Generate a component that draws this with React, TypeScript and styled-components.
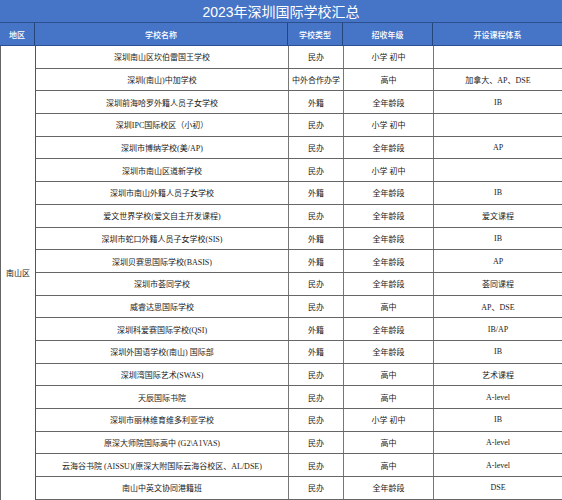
import React from 'react';
import styled, { createGlobalStyle } from 'styled-components';

const GlobalStyle = createGlobalStyle`
  html, body {
    margin: 0;
    padding: 0;
    background: #ffffff;
    overflow: hidden;
  }
`;

const COLS = '253px 55px 90px 1fr';
const ROW_HEIGHT = 22.7;

const Sheet = styled.div`
  width: 562px;
  height: 500px;
  overflow: hidden;
  background: #ffffff;
`;

const Title = styled.div`
  height: 22px;
  background: #4674c6;
  border-bottom: 1px solid #2c4f8f;
  color: #ffffff;
  font-family: 'Liberation Sans', 'Noto Sans CJK SC', sans-serif;
  font-size: 14px;
  display: flex;
  align-items: center;
  justify-content: center;
`;

const HeaderRow = styled.div`
  display: grid;
  grid-template-columns: 35px ${COLS};
  height: 22px;
  background: #4674c6;
  border-bottom: 1px solid #2c4f8f;
`;

const HeaderCell = styled.div<{ $last?: boolean }>`
  display: flex;
  align-items: center;
  justify-content: center;
  color: #ffffff;
  font-family: 'Noto Sans CJK SC', sans-serif;
  font-size: 8px;
  font-weight: 500;
  border-right: ${(p) => (p.$last ? 'none' : '1px solid #27457d')};
`;

const Body = styled.div`
  display: flex;
  border-left: 1px solid #666;
`;

const RegionCell = styled.div`
  width: 34px;
  flex: none;
  display: flex;
  align-items: center;
  justify-content: center;
  border-right: 1px solid #555;
  font-family: 'Liberation Serif', 'Noto Sans CJK SC', serif;
  font-size: 8px;
  color: #1a1a1a;
`;

const Rows = styled.div`
  flex: 1;
  display: flex;
  flex-direction: column;
`;

const Row = styled.div`
  display: grid;
  grid-template-columns: ${COLS};
  height: ${ROW_HEIGHT}px;
  box-sizing: border-box;
  border-bottom: 1px solid #666;
`;

const Cell = styled.div<{ $last?: boolean }>`
  display: flex;
  align-items: center;
  justify-content: center;
  white-space: nowrap;
  overflow: hidden;
  font-family: 'Liberation Serif', 'Noto Sans CJK SC', serif;
  font-size: 8px;
  color: #1a1a1a;
  border-right: ${(p) => (p.$last ? 'none' : '1px solid #777')};
`;

type School = [string, string, string, string];

const schools: School[] = [
  ['深圳南山区坎伯雷国王学校', '民办', '小学 初中', ''],
  ['深圳(南山)中加学校', '中外合作办学', '高中', '加拿大、AP、DSE'],
  ['深圳前海哈罗外籍人员子女学校', '外籍', '全年龄段', 'IB'],
  ['深圳IPC国际校区（小初）', '民办', '小学 初中', ''],
  ['深圳市博纳学校(美/AP)', '民办', '全年龄段', 'AP'],
  ['深圳市南山区道新学校', '民办', '小学 初中', ''],
  ['深圳市南山外籍人员子女学校', '外籍', '全年龄段', 'IB'],
  ['爱文世界学校(爱文自主开发课程)', '民办', '全年龄段', '爱文课程'],
  ['深圳市蛇口外籍人员子女学校(SIS)', '外籍', '全年龄段', 'IB'],
  ['深圳贝赛思国际学校(BASIS)', '外籍', '全年龄段', 'AP'],
  ['深圳市荟同学校', '民办', '全年龄段', '荟同课程'],
  ['威睿达思国际学校', '民办', '高中', 'AP、DSE'],
  ['深圳科爱赛国际学校(QSI)', '外籍', '全年龄段', 'IB/AP'],
  ['深圳外国语学校(南山) 国际部', '外籍', '全年龄段', 'IB'],
  ['深圳湾国际艺术(SWAS)', '民办', '高中', '艺术课程'],
  ['天辰国际书院', '民办', '高中', 'A-level'],
  ['深圳市丽林维育维多利亚学校', '民办', '小学 初中', 'IB'],
  ['原深大师院国际高中 (G2\\A1VAS)', '民办', '高中', 'A-level'],
  ['云海谷书院 (AISSU)(原深大附国际云海谷校区、AL/DSE)', '民办', '高中', 'A-level'],
  ['南山中英文协同港籍班', '民办', '全年龄段', 'DSE'],
];

const headers = ['地区', '学校名称', '学校类型', '招收年级', '开设课程体系'];

export default function App() {
  return (
    <Sheet>
      <GlobalStyle />
      <Title>2023年深圳国际学校汇总</Title>
      <HeaderRow>
        {headers.map((h, i) => (
          <HeaderCell key={h} $last={i === headers.length - 1}>
            {h}
          </HeaderCell>
        ))}
      </HeaderRow>
      <Body>
        <RegionCell>南山区</RegionCell>
        <Rows>
          {schools.map((s) => (
            <Row key={s[0]}>
              {s.map((v, i) => (
                <Cell key={i} $last={i === s.length - 1}>
                  {v}
                </Cell>
              ))}
            </Row>
          ))}
        </Rows>
      </Body>
    </Sheet>
  );
}
